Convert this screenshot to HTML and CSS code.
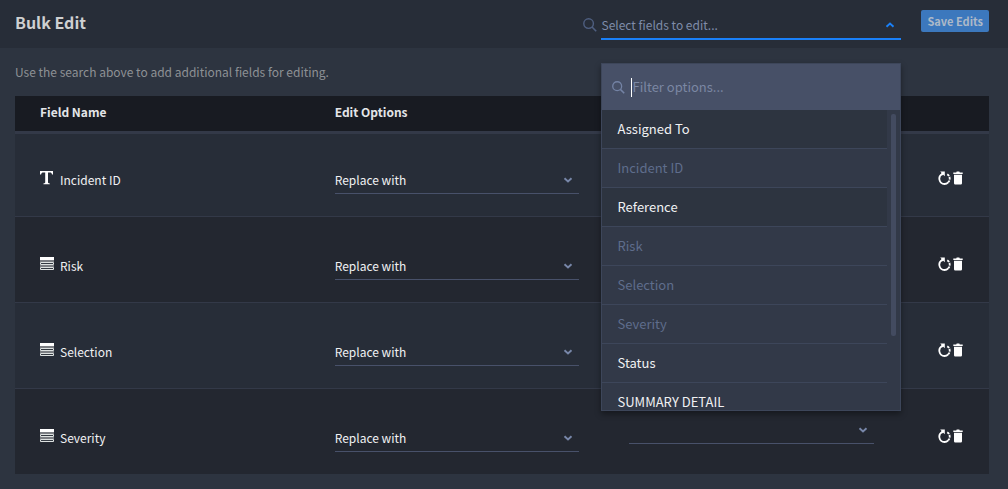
FILE: index.html
```html
<!DOCTYPE html>
<html lang="en">
<head>
<meta charset="utf-8">
<title>Bulk Edit</title>
<link rel="stylesheet" href="styles.css">
</head>
<body>
<svg class="sprite" aria-hidden="true">
  <symbol id="search" viewBox="0 0 14 14"><circle cx="5.6" cy="5.6" r="4.8" fill="none" stroke="currentColor" stroke-width="1.4"/><path d="M9 9l4.2 4.2" fill="none" stroke="currentColor" stroke-width="1.6"/></symbol>
  <symbol id="down" viewBox="0 0 10 8"><path d="M1.5 2.2L5 5.4l3.500-3.200" fill="none" stroke="currentColor" stroke-width="1.900"/></symbol>
  <symbol id="up" viewBox="0 0 10 8"><path d="M1.500 5.800L5 2.600l3.500 3.200" fill="none" stroke="currentColor" stroke-width="1.900"/></symbol>
  <symbol id="list" viewBox="0 0 14 16"><path d="M0 1h14v3H0z" fill="#fff"/><path d="M0 4h14v2H0zM0 9h14v2H0z" fill="#7b7e83"/><path d="M.5 6.500h13v2H.5zM.5 11.500h13v2H.5z" fill="#333941" stroke="#dde1e0"/></symbol>
  <symbol id="type" viewBox="0 0 14 16"><path d="M0 1h13v3.600h-1c-.3-1.600-.8-2.100-2.200-2.100H8v9.800c0 .7.300 1 1.800 1.100v.8H3.400v-.8c1.500-.1 1.800-.4 1.800-1.100V2.500H3.400C2 2.500 1.400 3 1.100 4.600H0z" fill="#fff"/></symbol>
  <symbol id="reset" viewBox="0 0 13 14"><path d="M4.200 3A5.300 5.300 0 0 0 6.500 13 5.300 5.300 0 0 0 10.200 11.400" fill="none" stroke="#fff" stroke-width="1.800"/><path d="M2.200.6h4.600v4.700L5.200 3.700 4 4.600 2.800 3.600 3.600 2z" fill="#fff"/><path d="M9.300 3.200A5.300 5.300 0 0 1 10.200 11.400" fill="none" stroke="#fff" stroke-width="1.800" stroke-dasharray="2.600 .8"/></symbol>
  <symbol id="trash" viewBox="0 0 10 14"><path d="M.3 1.400h2.900L3.700.5h2.600l.5.900h2.900v1.500H.3zM1 3.800h8v8.500q0 1.200-1.200 1.200H2.200Q1 13.500 1 12.300z" fill="#fff"/></symbol>
</svg>

<header class="topbar">
  <h1 class="title">Bulk Edit</h1>
  <div class="picker">
    <svg class="picker-icon"><use href="#search"/></svg>
    <div class="picker-box">
      <div class="select select-open">
        <select aria-label="Select fields to edit"><option>Select fields to edit...</option></select>
        <svg class="chevron"><use href="#up"/></svg>
      </div>
      <div class="menu">
        <div class="filter">
          <svg class="filter-icon"><use href="#search"/></svg>
          <span class="caret"></span>
          <input class="filter-input" type="text" placeholder="Filter options..." aria-label="Filter options">
        </div>
        <div class="menu-body">
          <ul class="options" role="listbox" aria-label="Fields">
            <li class="option available" role="option">Assigned To</li>
            <li class="option used" role="option" aria-disabled="true">Incident ID</li>
            <li class="option available" role="option">Reference</li>
            <li class="option used" role="option" aria-disabled="true">Risk</li>
            <li class="option used" role="option" aria-disabled="true">Selection</li>
            <li class="option used" role="option" aria-disabled="true">Severity</li>
            <li class="option" role="option">Status</li>
            <li class="option" role="option">SUMMARY DETAIL</li>
          </ul>
          <div class="scroll"><div class="thumb"></div></div>
        </div>
      </div>
    </div>
  </div>
  <button class="save" type="button">Save Edits</button>
</header>

<main class="content">
  <p class="hint">Use the search above to add additional fields for editing.</p>
  <table class="fields">
    <colgroup><col><col><col><col class="col-actions"></colgroup>
    <thead>
      <tr><th>Field Name</th><th>Edit Options</th><th></th><th></th></tr>
    </thead>
    <tbody>
      <tr>
        <td class="name"><div class="field"><svg class="field-icon"><use href="#type"/></svg>Incident ID</div></td>
        <td class="edit"><div class="select"><select aria-label="Edit option for Incident ID"><option>Replace with</option></select><svg class="chevron"><use href="#down"/></svg></div></td>
        <td class="value"><div class="select"><select aria-label="Value for Incident ID"><option></option></select><svg class="chevron"><use href="#down"/></svg></div></td>
        <td class="actions"><div class="tools"><button type="button" aria-label="Reset"><svg class="reset"><use href="#reset"/></svg></button><button type="button" aria-label="Delete"><svg class="trash"><use href="#trash"/></svg></button></div></td>
      </tr>
      <tr>
        <td class="name"><div class="field"><svg class="field-icon"><use href="#list"/></svg>Risk</div></td>
        <td class="edit"><div class="select"><select aria-label="Edit option for Risk"><option>Replace with</option></select><svg class="chevron"><use href="#down"/></svg></div></td>
        <td class="value"><div class="select"><select aria-label="Value for Risk"><option></option></select><svg class="chevron"><use href="#down"/></svg></div></td>
        <td class="actions"><div class="tools"><button type="button" aria-label="Reset"><svg class="reset"><use href="#reset"/></svg></button><button type="button" aria-label="Delete"><svg class="trash"><use href="#trash"/></svg></button></div></td>
      </tr>
      <tr>
        <td class="name"><div class="field"><svg class="field-icon"><use href="#list"/></svg>Selection</div></td>
        <td class="edit"><div class="select"><select aria-label="Edit option for Selection"><option>Replace with</option></select><svg class="chevron"><use href="#down"/></svg></div></td>
        <td class="value"><div class="select"><select aria-label="Value for Selection"><option></option></select><svg class="chevron"><use href="#down"/></svg></div></td>
        <td class="actions"><div class="tools"><button type="button" aria-label="Reset"><svg class="reset"><use href="#reset"/></svg></button><button type="button" aria-label="Delete"><svg class="trash"><use href="#trash"/></svg></button></div></td>
      </tr>
      <tr>
        <td class="name"><div class="field"><svg class="field-icon"><use href="#list"/></svg>Severity</div></td>
        <td class="edit"><div class="select"><select aria-label="Edit option for Severity"><option>Replace with</option></select><svg class="chevron"><use href="#down"/></svg></div></td>
        <td class="value"><div class="select"><select aria-label="Value for Severity"><option></option></select><svg class="chevron"><use href="#down"/></svg></div></td>
        <td class="actions"><div class="tools"><button type="button" aria-label="Reset"><svg class="reset"><use href="#reset"/></svg></button><button type="button" aria-label="Delete"><svg class="trash"><use href="#trash"/></svg></button></div></td>
      </tr>
    </tbody>
  </table>
</main>
</body>
</html>
```
FILE: styles.css
```css
* { box-sizing: border-box; }

body {
  margin: 0;
  background: #2d3440;
  color: #f0f1f3;
  font: 12px/20px "Noto Sans CJK SC", "Noto Sans", sans-serif;
}

button, input, select { font: inherit; }

.sprite { display: none; }

.topbar {
  display: flex;
  align-items: flex-start;
  gap: 20px;
  height: 48px;
  padding: 10px 19px 0 15px;
  background: #272d38;
}

.title {
  flex: 1;
  margin: 0;
  color: #cfd0d1;
  font-size: 16px;
  line-height: 24px;
  font-weight: 700;
}

.picker { display: flex; gap: 4px; padding-top: 4px; }

.picker-icon {
  width: 14px;
  height: 14px;
  margin-top: 4px;
  color: #4f5f80;
}

.picker-box { position: relative; width: 300px; }

.select {
  display: grid;
  align-items: center;
  border-bottom: 1px solid #48516a;
}

.select > * { grid-area: 1 / 1; }

.select select {
  appearance: none;
  width: 100%;
  height: 25px;
  padding: 0 0 2px;
  border: 0;
  background: transparent;
  color: #f0f1f3;
}

.chevron {
  justify-self: end;
  width: 10px;
  height: 8px;
  margin: 0 6px 2px 0;
  color: #7887a9;
  pointer-events: none;
}

.select-open { border-bottom: 2px solid #1a80f8; }
.select-open select { height: 24px; color: #7f8ca9; }
.select-open .chevron { color: #1a80f8; }

.save {
  height: 22px;
  padding: 0 6px;
  border: 0;
  border-radius: 2px;
  background: #3c78bd;
  color: #adb9c8;
  font-weight: 700;
  font-size: 11px;
  line-height: 22px;
}

.menu {
  position: absolute;
  top: 49px;
  left: 0;
  width: 100%;
  border: 1px solid #3d465a;
  background: #323948;
  box-shadow: 0 3px 6px rgba(0, 0, 0, .4);
}

.filter {
  display: flex;
  align-items: center;
  height: 46px;
  padding: 0 10px;
  background: #475067;
}

.filter-icon { width: 13px; height: 13px; margin-right: 6px; color: #7483a5; }
.caret { width: 1px; height: 19px; background: #fff; }

.filter-input {
  flex: 1;
  padding: 0;
  border: 0;
  outline: 0;
  background: transparent;
  color: #fff;
  font-size: 13px;
}

.filter-input::placeholder { color: #7b87a3; }

.menu-body { display: flex; height: 300px; overflow: hidden; }

.options { flex: 1; margin: 0; padding: 0; list-style: none; }

.option {
  padding: 0 15px;
  border-bottom: 1px solid #3d465a;
  font-size: 13px;
  line-height: 38px;
}

.available { background: #2d3440; }
.used { color: #5f6d8c; }

.scroll { width: 13px; padding: 4px; }
.thumb { width: 5px; height: 222px; border-radius: 2px; background: #434b60; }

.content { padding: 14px 19px 15px 15px; }
.hint { margin: 0 0 14px; color: #8d9195; }

.fields {
  width: 100%;
  table-layout: fixed;
  border-spacing: 0;
}

.col-actions { width: 90px; }

.fields th {
  padding: 6px 25px 9px;
  border-bottom: 3px solid #333948;
  background: #181b22;
  color: #e3e5e8;
  text-align: left;
  font-weight: 700;
}

.fields td {
  border-bottom: 1px solid #333948;
  background: #272d38;
  vertical-align: bottom;
}

.fields tr:nth-child(even) td { background: #232730; }
.fields tbody tr:last-child td { border-bottom: 0; }

.fields .name { padding: 0 25px 26px; }
.fields .edit { padding: 37px 25px 22px; }
.fields .value { padding: 0 25px 30px; }
.fields .actions { padding: 0 25px 31px 39px; }
.fields tr:first-child .edit { padding-top: 34px; }

.field { display: flex; gap: 6px; }
.field-icon { width: 14px; height: 16px; }

.tools { display: flex; gap: 2px; }
.tools button { display: flex; padding: 0; border: 0; background: transparent; }
.reset { width: 13px; height: 14px; }
.trash { width: 10px; height: 14px; }
```
